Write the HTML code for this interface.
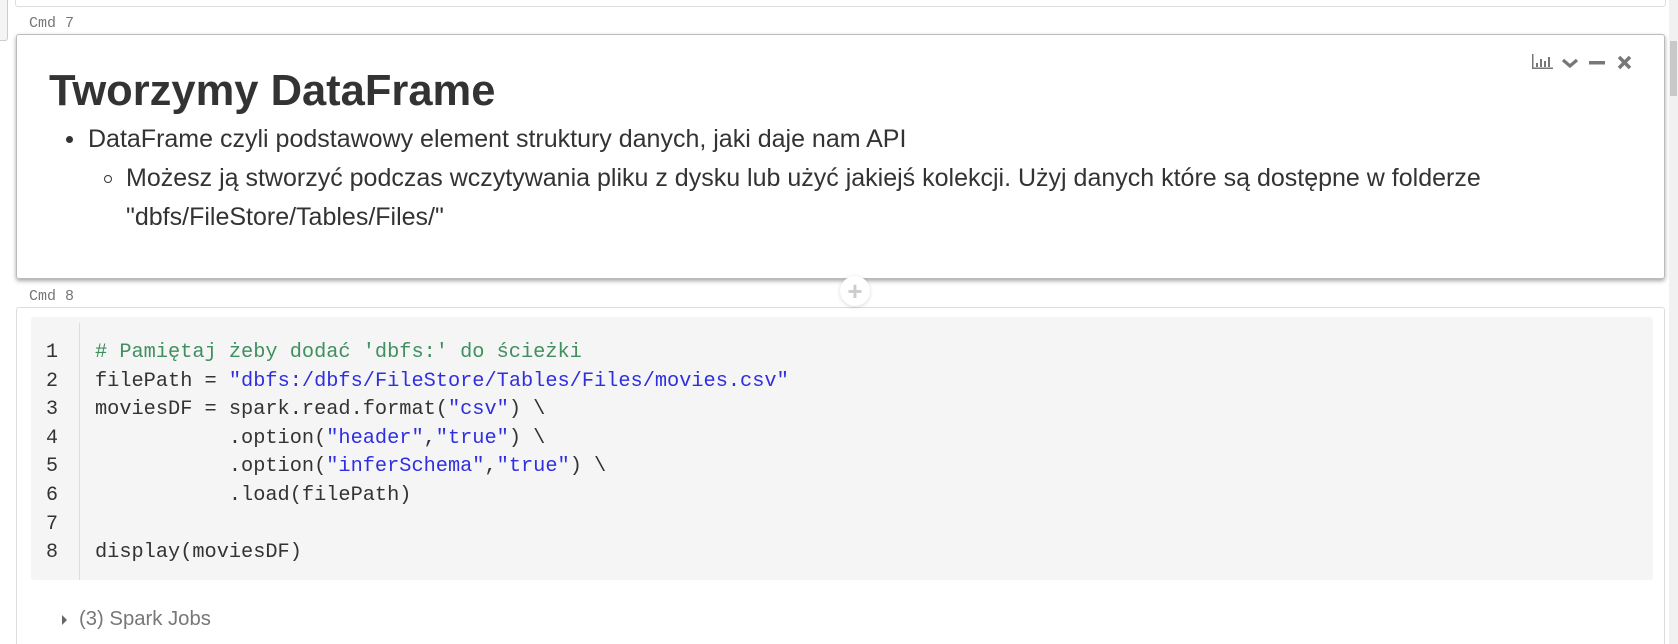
<!DOCTYPE html>
<html style="overflow:hidden;height:644px"><head><style>
body{margin:0;width:1678px;height:644px;background:#fff;position:relative;overflow:hidden;font-family:"Liberation Sans",sans-serif}
.abs{position:absolute}
.cmd{position:absolute;font-family:"Liberation Mono",monospace;font-size:15px;color:#777}
.code{position:absolute;left:95px;font-family:"Liberation Mono",monospace;font-size:20.3px;color:#333;white-space:pre;line-height:28.6px}
.ln{position:absolute;left:40px;width:24px;text-align:center;font-family:"Liberation Mono",monospace;font-size:20px;color:#333;line-height:28.6px}
.c{color:#3f8f5f}.s{color:#2f2fe0}
.t{font-size:25px;color:#333;line-height:29px}
</style></head><body>
<div class="abs" style="left:0;top:0;width:7px;height:40px;border:1px solid #ccc;border-left:none;border-top:none;border-radius:0 0 3px 0;background:#f4f4f4"></div>
<div class="abs" style="left:15px;top:-10px;width:1649px;height:15px;border:1px solid #ddd;border-radius:3px"></div>
<div class="cmd" style="left:29px;top:15px">Cmd 7</div>
<div class="abs" style="left:16px;top:34px;width:1647px;height:243px;border:1px solid #bbb;border-radius:3px;box-shadow:0 2px 4px rgba(0,0,0,.35)"></div>
<div class="abs" style="left:49px;top:67px;font-size:43.5px;font-weight:bold;color:#333">Tworzymy DataFrame</div>
<div class="abs" style="left:66px;top:136px;width:7px;height:7px;border-radius:50%;background:#333"></div>
<div class="abs t" style="left:88px;top:125px">DataFrame czyli podstawowy element struktury danych, jaki daje nam API</div>
<div class="abs" style="left:104px;top:175px;width:6px;height:6px;border-radius:50%;border:1px solid #333"></div>
<div class="abs t" style="left:126px;top:164px">Możesz ją stworzyć podczas wczytywania pliku z dysku lub użyć jakiejś kolekcji. Użyj danych które są dostępne w folderze</div>
<div class="abs t" style="left:126px;top:203px">"dbfs/FileStore/Tables/Files/"</div>
<svg class="abs" style="left:1530px;top:52px" width="115" height="22" viewBox="0 0 115 22">
<g fill="#777"><rect x="2" y="2" width="1.5" height="15"/><rect x="2" y="15.5" width="21" height="1.5"/><rect x="6" y="11" width="2" height="4"/><rect x="10" y="7" width="2" height="8"/><rect x="14" y="9" width="2" height="6"/><rect x="18" y="5" width="2" height="10"/></g>
<path d="M33 8l7 6 7-6" stroke="#777" stroke-width="3.2" fill="none"/>
<rect x="59" y="9" width="16" height="3.5" fill="#777"/>
<path d="M89 5l11 11M100 5L89 16" stroke="#777" stroke-width="3.5"/>
</svg>
<div class="cmd" style="left:29px;top:288px">Cmd 8</div>
<div class="abs" style="left:16px;top:307px;width:1647px;height:345px;border:1px solid #ddd;border-radius:3px"></div>
<div class="abs" style="left:840px;top:276px;width:30px;height:30px;border-radius:50%;background:#fff;box-shadow:0 1px 4px rgba(0,0,0,.15);color:#ccc;font-size:26px;font-weight:bold;text-align:center;line-height:30px">+</div>
<div class="abs" style="left:31px;top:317px;width:1622px;height:263px;background:#f5f5f5;border-radius:3px"></div>
<div class="abs" style="left:79px;top:323px;width:1px;height:257px;background:#ddd"></div>
<div class="ln" style="top:339px">1<br>2<br>3<br>4<br>5<br>6<br>7<br>8</div>
<div class="code" style="top:339px"><span class="c"># Pamiętaj żeby dodać 'dbfs:' do ścieżki</span>
filePath = <span class="s">"dbfs:/dbfs/FileStore/Tables/Files/movies.csv"</span>
moviesDF = spark.read.format(<span class="s">"csv"</span>) \
           .option(<span class="s">"header"</span>,<span class="s">"true"</span>) \
           .option(<span class="s">"inferSchema"</span>,<span class="s">"true"</span>) \
           .load(filePath)

display(moviesDF)</div>
<div class="abs" style="left:62px;top:615px;width:0;height:0;border-left:5px solid #666;border-top:5px solid transparent;border-bottom:5px solid transparent"></div>
<div class="abs" style="left:79px;top:608px;font-size:20.3px;color:#777">(3) Spark Jobs</div>
<div class="abs" style="left:1669px;top:0;width:9px;height:644px;background:#f1f1f1"></div>
<div class="abs" style="left:1670px;top:41px;width:7px;height:55px;background:#c8c8c8"></div>
</body></html>
